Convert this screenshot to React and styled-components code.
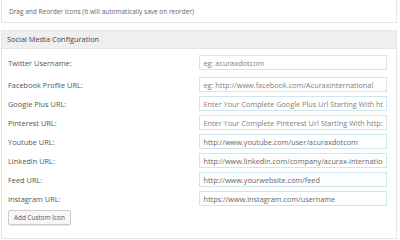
import styled, { createGlobalStyle } from "styled-components";

const Global = createGlobalStyle`
  html, body {
    margin: 0;
    background: #ffffff;
    font-family: "Open Sans", "Liberation Sans", sans-serif;
    overflow: hidden;
  }
`;

const fields = [
  { label: "Twitter Username:", value: "", hint: "eg: acuraxdotcom" },
  { label: "Facebook Profile URL:", value: "", hint: "eg: http://www.facebook.com/Acuraxinternational" },
  { label: "Google Plus URL:", value: "", hint: "Enter Your Complete Google Plus Url Starting With http://" },
  { label: "Pinterest URL:", value: "", hint: "Enter Your Complete Pinterest Url Starting With http://" },
  { label: "Youtube URL:", value: "http://www.youtube.com/user/acuraxdotcom", hint: "" },
  { label: "Linkedin URL:", value: "http://www.linkedin.com/company/acurax-international", hint: "" },
  { label: "Feed URL:", value: "http://www.yourwebsite.com/feed", hint: "" },
  { label: "Instagram URL:", value: "https://www.instagram.com/username", hint: "" },
];

export default function App() {
  return (
    <>
      <Global />
      <Page>
        <Note>Drag and Reorder Icons (It will automatically save on reorder)</Note>
        <Panel>
          <PanelHead>Social Media Configuration</PanelHead>
          <PanelBody>
            {fields.map((f, i) => (
              <Row key={f.label} $first={i === 0}>
                <Label>{f.label}</Label>
                <Field type="text" defaultValue={f.value} placeholder={f.hint} />
              </Row>
            ))}
            <AddBtn type="button">Add Custom Icon</AddBtn>
          </PanelBody>
        </Panel>
      </Page>
    </>
  );
}

const Page = styled.div`
  padding: 0 3px 0 1px;
  display: flex;
  flex-direction: column;
  gap: 7px;
`;

const Note = styled.div`
  margin-top: -6px;
  padding: 12px 0 0 7px;
  box-sizing: border-box;
  height: 29px;
  border: 1px solid #e5e5e5;
  font-size: 6.5px;
  color: #666666;
  background: #ffffff;
`;

const Panel = styled.div`
  border: 1px solid #e5e5e5;
  background: #ffffff;
  height: 209px;
  box-sizing: border-box;
`;

const PanelHead = styled.div`
  height: 17px;
  line-height: 17px;
  padding-left: 5px;
  background: #efefef;
  border-bottom: 1px solid #e5e5e5;
  font-size: 7.4px;
  color: #444444;
`;

const PanelBody = styled.div`
  padding: 6px 9px 0 6px;
  display: flex;
  flex-direction: column;
`;

const Row = styled.div`
  display: flex;
  align-items: center;
  height: 15px;
  margin-bottom: ${(p) => (p.$first ? "7px" : "4px")};
`;

const Label = styled.div`
  width: 192px;
  font-size: 7.4px;
  color: #555555;
`;

const Field = styled.input`
  width: 188px;
  height: 15px;
  box-sizing: border-box;
  border: 1px solid #cfe6f1;
  padding: 0 3px;
  font-family: "Open Sans", "Liberation Sans", sans-serif;
  font-size: 7.3px;
  color: #666666;
  outline: none;
  &::placeholder {
    color: #808080;
  }
`;

const AddBtn = styled.button`
  align-self: flex-start;
  margin-top: 0;
  height: 15px;
  padding: 0 5px;
  border: 1px solid #cccccc;
  border-radius: 2px;
  background: #f7f7f7;
  font-family: "Open Sans", "Liberation Sans", sans-serif;
  font-size: 6.4px;
  color: #555555;
  box-shadow: 0 1px 0 #e5e5e5;
`;
